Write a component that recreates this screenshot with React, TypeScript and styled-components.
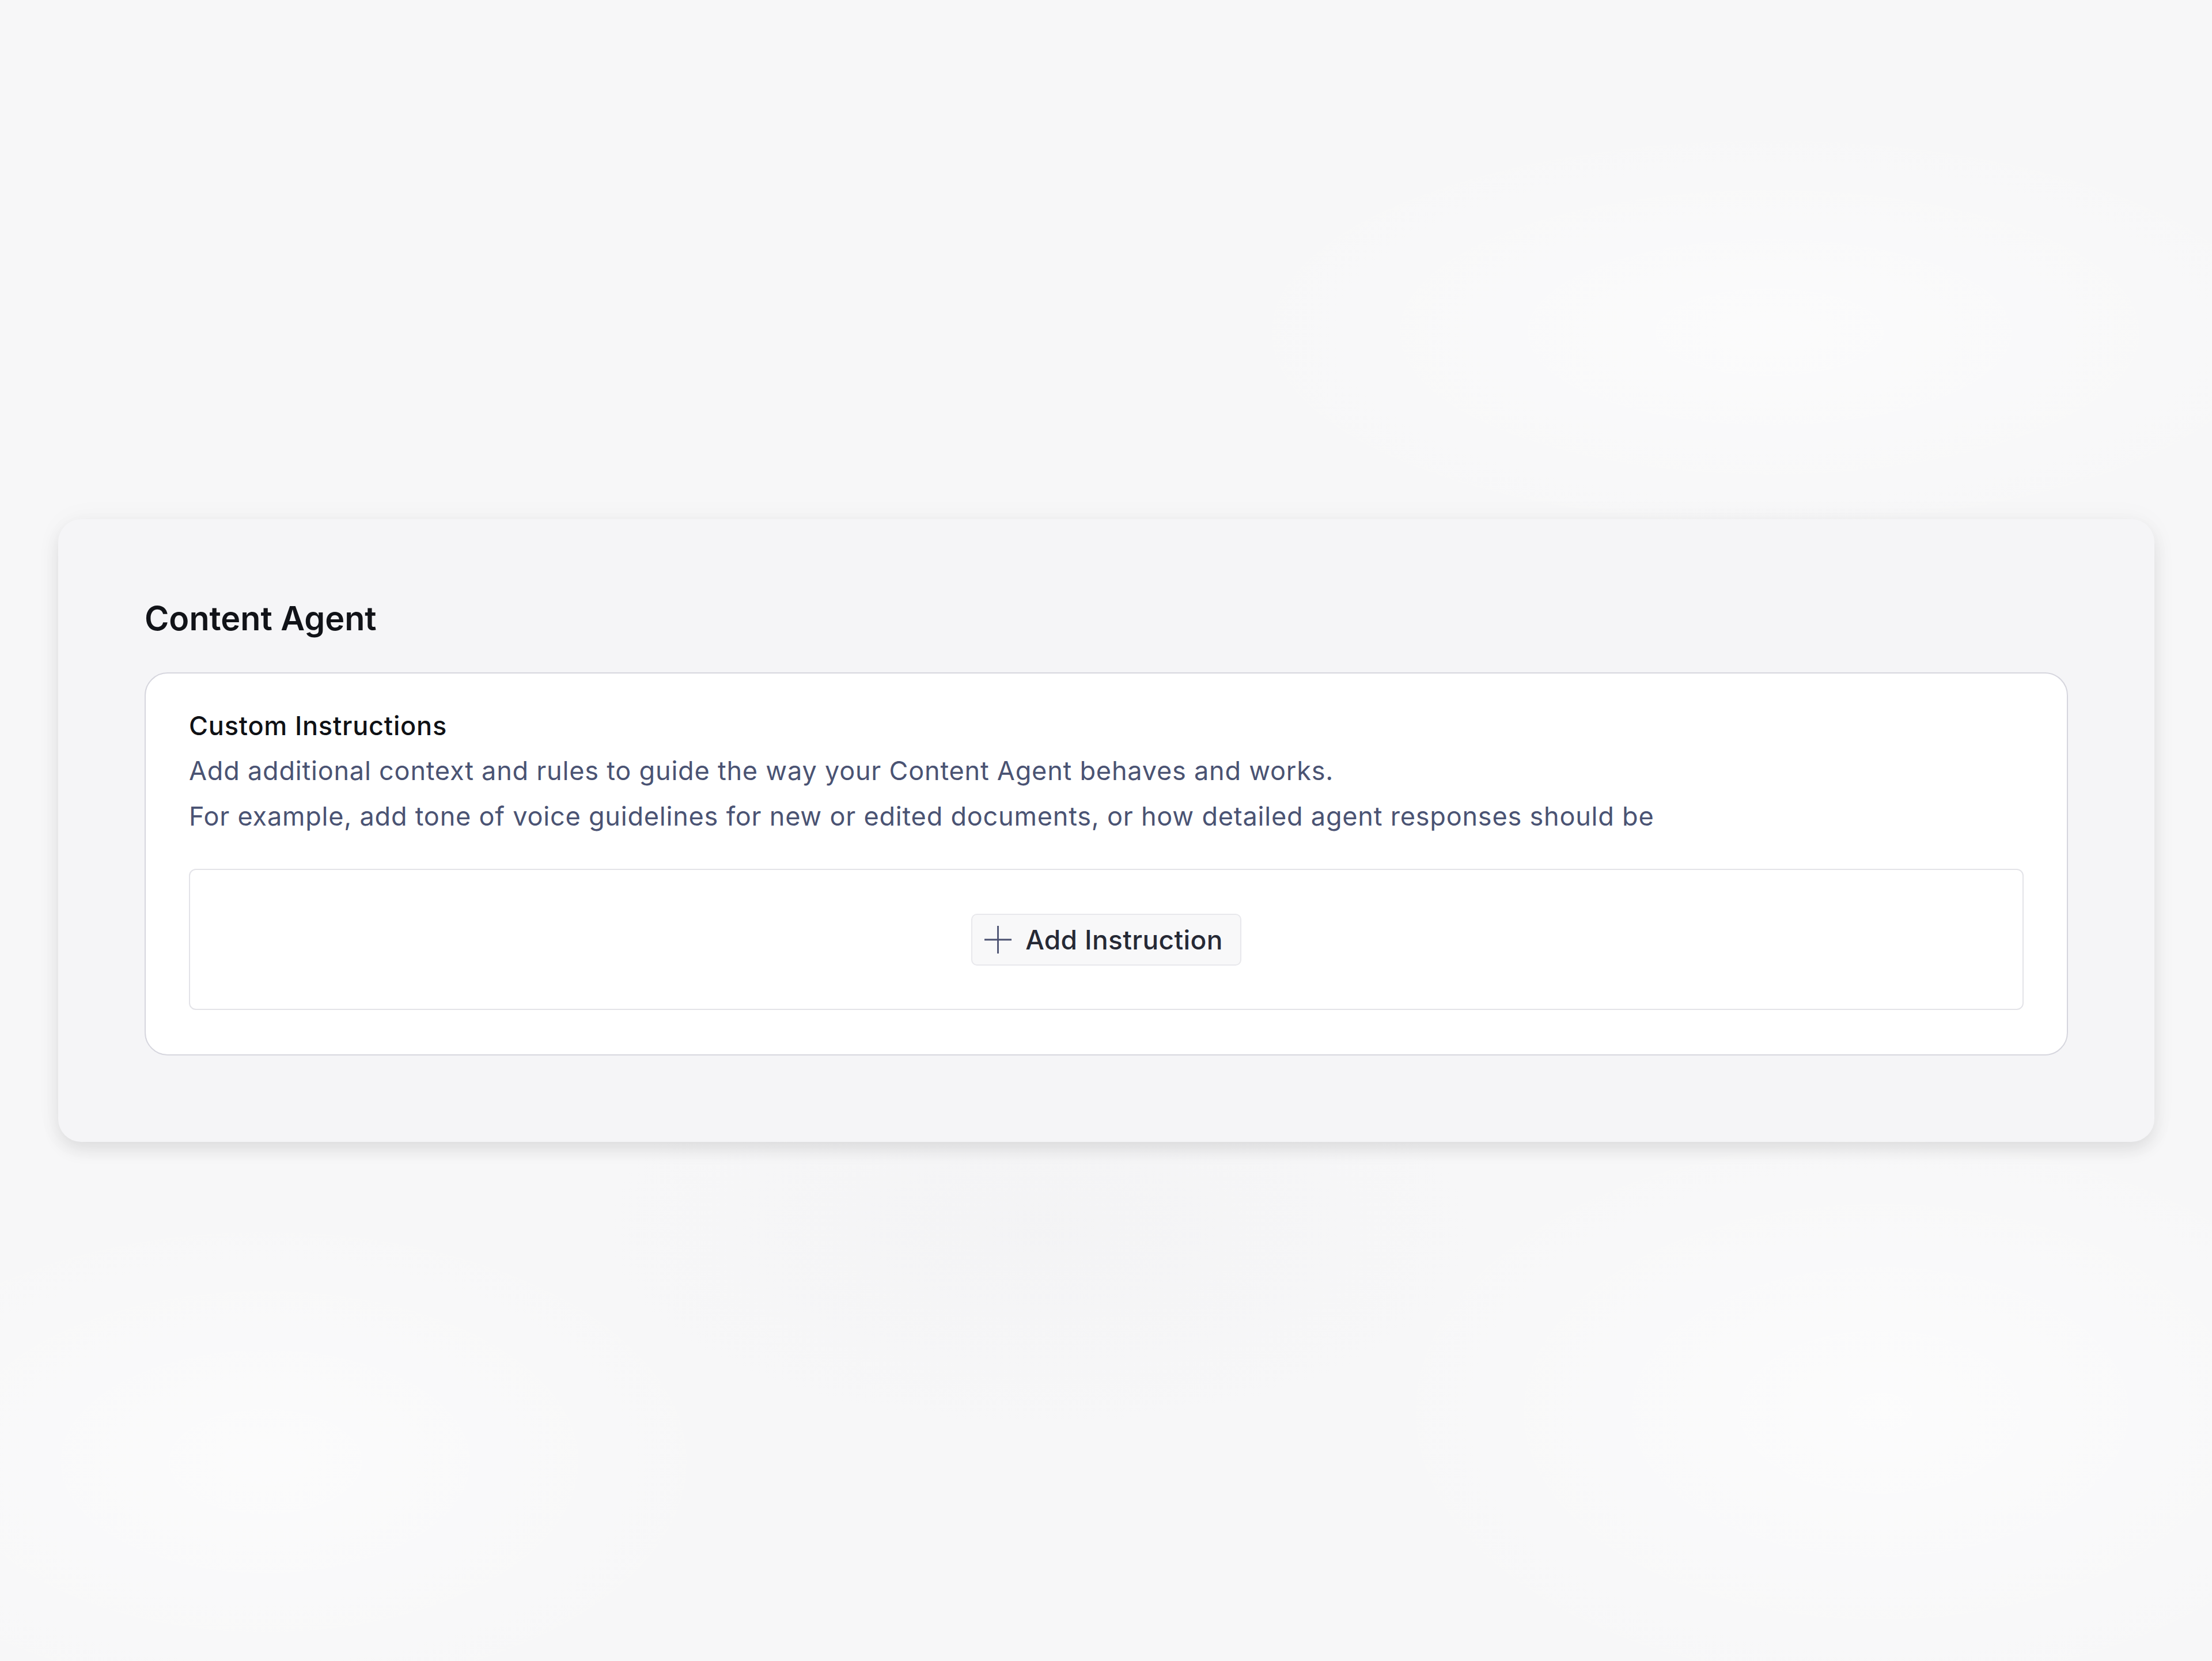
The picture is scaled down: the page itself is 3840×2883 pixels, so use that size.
import styled, { createGlobalStyle } from 'styled-components';

const GlobalStyle = createGlobalStyle`
  html,
  body {
    margin: 0;
    padding: 0;
  }

  body {
    font-family: Inter, 'Noto Sans', 'Liberation Sans', sans-serif;
    background-color: #f7f7f8;
    -webkit-font-smoothing: antialiased;
  }
`;

const PlusIcon = () => (
  <svg width="47" height="48" viewBox="0 0 47 48" fill="none" aria-hidden="true">
    <path d="M0 24H47M23.5 0V48" stroke="#4a5070" strokeWidth="2.8" />
  </svg>
);

const App = () => {
  return (
    <>
      <GlobalStyle />
      <Page>
        <Panel>
          <PanelTitle>Content Agent</PanelTitle>
          <SectionCard>
            <SectionTitle>Custom Instructions</SectionTitle>
            <Description>
              Add additional context and rules to guide the way your Content Agent behaves and
              works.
              <br />
              For example, add tone of voice guidelines for new or edited documents, or how
              detailed agent responses should be
            </Description>
            <InstructionBox>
              <AddButton type="button">
                <PlusIcon />
                <ButtonLabel>Add Instruction</ButtonLabel>
              </AddButton>
            </InstructionBox>
          </SectionCard>
        </Panel>
      </Page>
    </>
  );
};

const Page = styled.div`
  box-sizing: border-box;
  min-height: 2883px;
  padding: 901px 100px 0 101px;
  background:
    radial-gradient(ellipse 1100px 600px at 12% 88%, rgba(255, 255, 255, 0.55), transparent 75%),
    radial-gradient(ellipse 1200px 700px at 85% 85%, rgba(255, 255, 255, 0.6), transparent 75%),
    radial-gradient(ellipse 1300px 500px at 80% 20%, rgba(255, 255, 255, 0.55), transparent 75%),
    radial-gradient(ellipse 1000px 450px at 47% 74%, rgba(240, 240, 242, 0.5), transparent 75%),
    #f7f7f8;
`;

const Panel = styled.section`
  box-sizing: border-box;
  width: 3639px;
  height: 1081px;
  padding: 139px 150px 150px;
  background-color: #f5f5f7;
  border-radius: 40px;
  box-shadow:
    0 14px 30px rgba(0, 0, 0, 0.09),
    0 0 50px rgba(0, 0, 0, 0.035);
  display: flex;
  flex-direction: column;
`;

const PanelTitle = styled.h1`
  margin: 0 0 60px;
  font-size: 57.5px;
  font-weight: 600;
  line-height: 67px;
  color: #111318;
`;

const SectionCard = styled.div`
  box-sizing: border-box;
  flex: 1;
  padding: 63px 75px 76px;
  background-color: #ffffff;
  border: 2px solid #d6d6de;
  border-radius: 40px;
  display: flex;
  flex-direction: column;
`;

const SectionTitle = styled.h2`
  margin: 0;
  font-size: 45px;
  font-weight: 500;
  line-height: 56px;
  letter-spacing: 0.8px;
  color: #0f1115;
`;

const Description = styled.p`
  margin: 10px 0 0;
  font-size: 45px;
  font-weight: 400;
  line-height: 79px;
  letter-spacing: 0.8px;
  color: #4a5373;
`;

const InstructionBox = styled.div`
  box-sizing: border-box;
  height: 245px;
  margin-top: 52px;
  border: 2px solid #e3e3e8;
  border-radius: 12px;
  display: flex;
  align-items: center;
  justify-content: center;
`;

const AddButton = styled.button`
  box-sizing: border-box;
  height: 90px;
  padding: 0 30px 0 21px;
  display: inline-flex;
  align-items: center;
  gap: 24px;
  background-color: #f8f8f9;
  border: 2px solid #e8e8ec;
  border-radius: 10px;
  font-family: inherit;
  cursor: pointer;
`;

const ButtonLabel = styled.span`
  font-size: 46px;
  font-weight: 500;
  line-height: 1;
  letter-spacing: 0.4px;
  color: #262935;
`;

export default App;
